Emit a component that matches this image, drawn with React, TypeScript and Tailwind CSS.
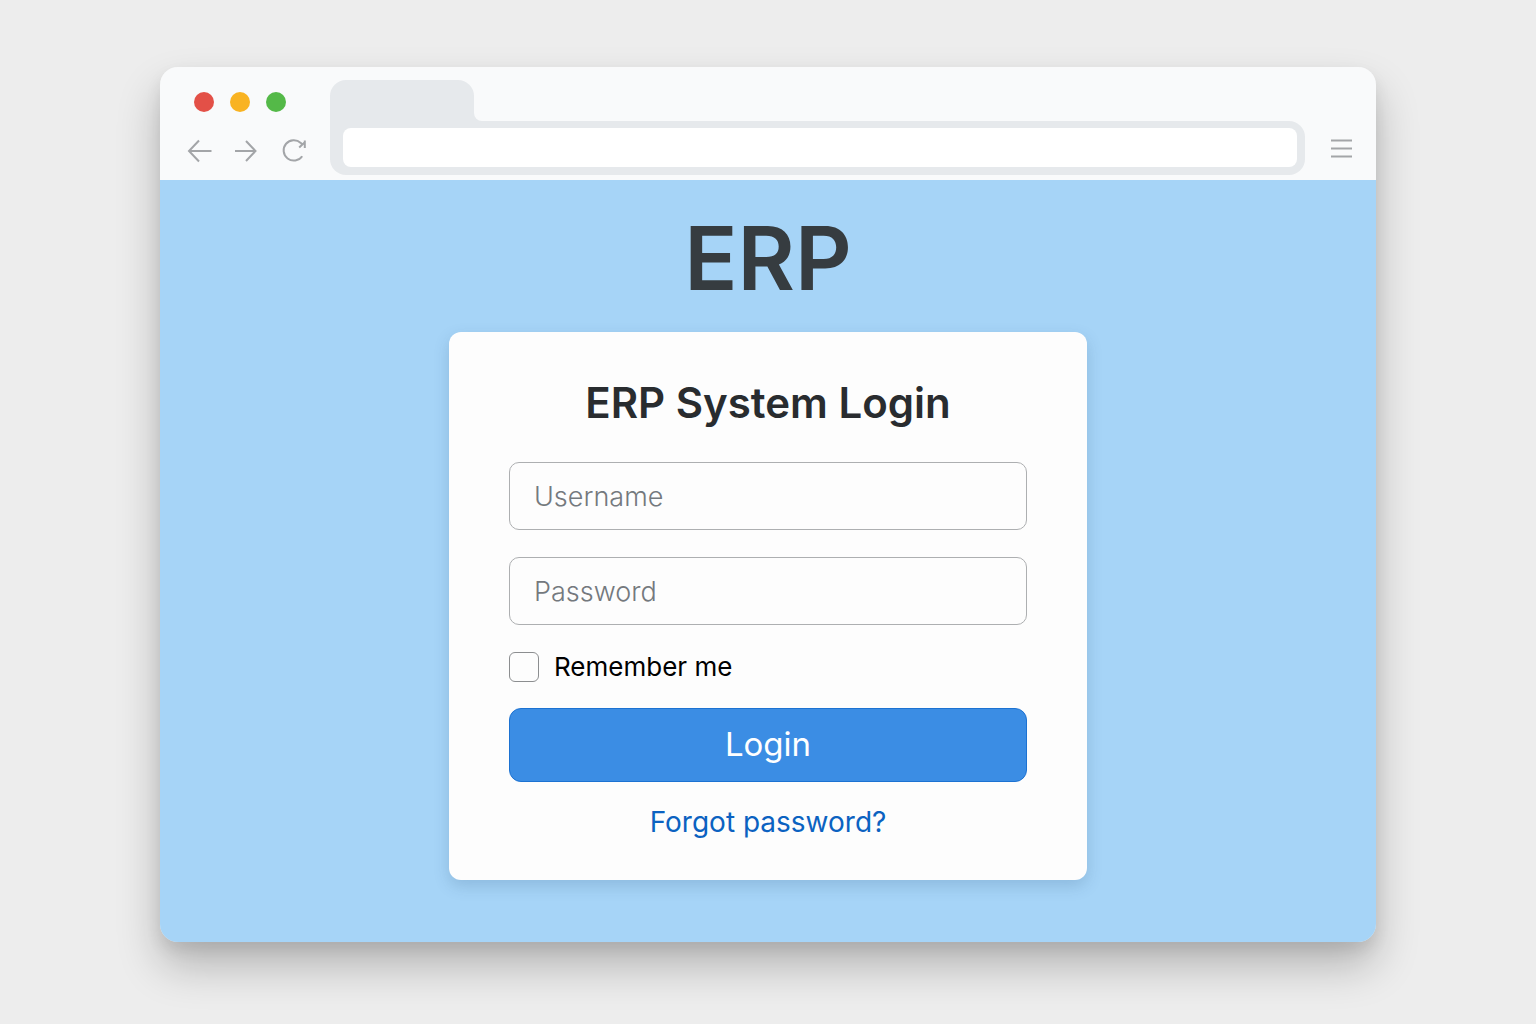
import { useState } from 'react'
import type { FormEvent } from 'react'

const trafficLights = [
  { label: 'Close', color: 'bg-[#e35047]' },
  { label: 'Minimize', color: 'bg-[#f9b322]' },
  { label: 'Maximize', color: 'bg-[#54b948]' },
]

const navButtons = [
  { label: 'Back', path: 'M23.5 12H1M11 1.5L1 12l10 10.5' },
  { label: 'Forward', path: 'M0 12h20.5M11 2l9.5 10L11 22' },
  { label: 'Reload', path: 'M20.2 17.2A10.2 10.2 0 1 1 18.8 3.9L20.6 5.8M22.8 1.5v7.5M22.8 3.2L17.2 8.4' },
]

function BrowserBar() {
  return (
    <header className="flex h-[113px] bg-[#f9fafb]">
      {/* Window controls and history */}
      <div className="flex w-[170px] shrink-0 flex-col pt-[25px] pr-6 pl-7">
        <div className="flex gap-4 pl-1.5">
          {trafficLights.map((light) => (
            <button
              key={light.label}
              type="button"
              aria-label={light.label}
              className={`size-5 rounded-full ${light.color}`}
            />
          ))}
        </div>
        <div className="mt-[27px] flex justify-between">
          {navButtons.map((button) => (
            <button key={button.label} type="button" aria-label={button.label} className="text-[#a3a5a8]">
              <svg viewBox="0 0 24 24" className="size-6 overflow-visible" fill="none" stroke="currentColor" strokeWidth="2">
                <path d={button.path} />
              </svg>
            </button>
          ))}
        </div>
      </div>

      {/* Tab and address bar */}
      <div className="flex min-w-0 flex-1 flex-col pt-[13px]">
        <div className="flex items-end">
          <div className="h-[41px] w-36 rounded-t-2xl bg-[#e6e9ec]" />
          <svg viewBox="0 0 8 8" className="size-2 text-[#e6e9ec]">
            <path d="M0 0v8h8a8 8 0 0 1-8-8z" fill="currentColor" />
          </svg>
        </div>
        <div className="rounded-r-2xl rounded-bl-2xl bg-[#e6e9ec] pt-[7px] pr-2 pb-2 pl-[13px]">
          <input
            type="text"
            aria-label="Address"
            className="block h-[39px] w-full rounded-lg bg-white px-4 text-base outline-none"
          />
        </div>
      </div>

      <div className="w-[71px] shrink-0 pt-[69px] pl-6">
        <button type="button" aria-label="Menu" className="block text-[#a3a5a8]">
          <svg viewBox="0 0 24 24" className="size-6" fill="none" stroke="currentColor" strokeWidth="2">
            <path d="M2 4.5h21M2 12.5h21M2 20.5h21" />
          </svg>
        </button>
      </div>
    </header>
  )
}

function LoginCard() {
  const [username, setUsername] = useState('')
  const [password, setPassword] = useState('')
  const [remember, setRemember] = useState(false)

  const handleSubmit = (e: FormEvent) => {
    e.preventDefault()
  }

  const fieldClass =
    'block h-[68px] w-full rounded-[10px] border border-[#adafb1] bg-transparent px-6 text-[27px] font-light text-[#26292c] outline-none placeholder:text-[#74797e]'

  return (
    <form
      onSubmit={handleSubmit}
      className="w-full max-w-[638px] rounded-xl bg-[#fdfdfd] px-[60px] pt-[43px] pb-[38px] shadow-[0_6px_16px_rgba(40,80,120,0.2)]"
    >
      <h2 className="text-center text-[42px] leading-14 font-semibold text-[#292c2f]">ERP System Login</h2>

      <div className="mt-[31px] space-y-[27px]">
        <input
          type="text"
          aria-label="Username"
          placeholder="Username"
          value={username}
          onChange={(e) => { setUsername(e.target.value) }}
          className={fieldClass}
        />
        <input
          type="password"
          aria-label="Password"
          placeholder="Password"
          value={password}
          onChange={(e) => { setPassword(e.target.value) }}
          className={fieldClass}
        />
      </div>

      <label className="mt-[26px] flex items-center gap-[15px] text-[26px] leading-8 text-black">
        <input
          type="checkbox"
          checked={remember}
          onChange={(e) => { setRemember(e.target.checked) }}
          className="size-[30px] appearance-none rounded-md border border-[#8c8e90] checked:bg-[#3b8de4]"
        />
        Remember me
      </label>

      <button
        type="submit"
        className="mt-[25px] h-[74px] w-full rounded-xl border border-[#1c72d2] bg-[#3b8de4] text-[33px] text-white"
      >
        Login
      </button>

      <p className="mt-5 text-center text-[28px] leading-10">
        <a href="#forgot" className="text-[#0b62c1]">
          Forgot password?
        </a>
      </p>
    </form>
  )
}

export default function App() {
  return (
    <div className="min-h-screen bg-[#ededed] px-4 pt-[67px] pb-[82px] font-[Inter,sans-serif] lg:px-40">
      <div className="overflow-hidden rounded-[18px] shadow-[0_24px_44px_rgba(0,0,0,0.24),0_8px_16px_rgba(0,0,0,0.08)]">
        <BrowserBar />
        <main className="flex flex-col items-center bg-[#a6d4f7] px-6 pt-8 pb-[62px]">
          <h1 className="text-[88px] leading-[92px] font-semibold text-[#363c40]">ERP</h1>
          <div className="mt-7 flex w-full justify-center">
            <LoginCard />
          </div>
        </main>
      </div>
    </div>
  )
}
